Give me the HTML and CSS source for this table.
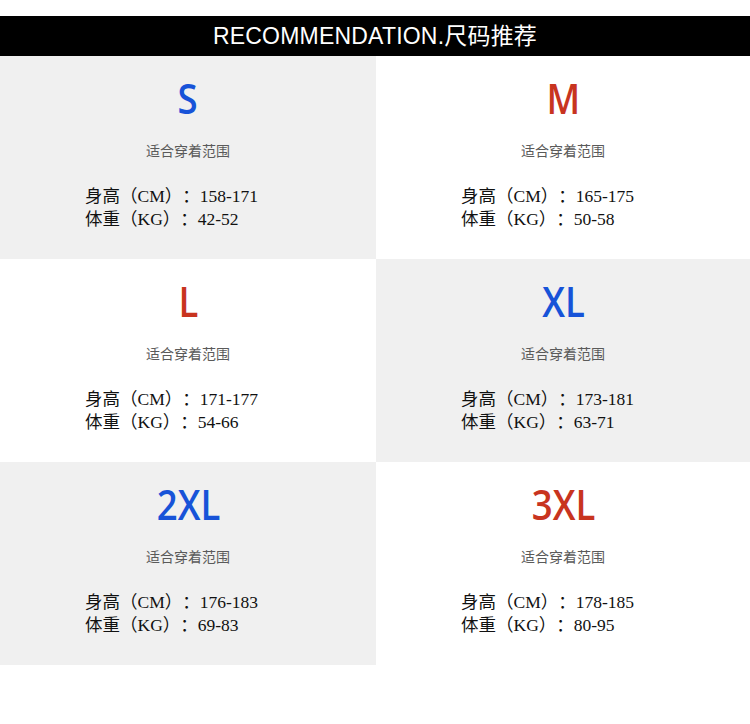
FILE: index.html
```html
<!DOCTYPE html>
<html lang="zh">
<head>
<meta charset="utf-8">
<title>尺码推荐</title>
<link rel="stylesheet" href="styles.css">
</head>
<body>
<div class="page">
  <header class="banner">RECOMMENDATION.尺码推荐</header>
  <section class="grid">
    <div class="cell gray">
      <div class="size blue">S</div>
      <div class="sub">适合穿着范围</div>
      <div class="info"><div>身高（CM）：158-171</div><div>体重（KG）：42-52</div></div>
    </div>
    <div class="cell">
      <div class="size red">M</div>
      <div class="sub">适合穿着范围</div>
      <div class="info"><div>身高（CM）：165-175</div><div>体重（KG）：50-58</div></div>
    </div>
    <div class="cell">
      <div class="size red">L</div>
      <div class="sub">适合穿着范围</div>
      <div class="info"><div>身高（CM）：171-177</div><div>体重（KG）：54-66</div></div>
    </div>
    <div class="cell gray">
      <div class="size blue">XL</div>
      <div class="sub">适合穿着范围</div>
      <div class="info"><div>身高（CM）：173-181</div><div>体重（KG）：63-71</div></div>
    </div>
    <div class="cell gray">
      <div class="size blue">2XL</div>
      <div class="sub">适合穿着范围</div>
      <div class="info"><div>身高（CM）：176-183</div><div>体重（KG）：69-83</div></div>
    </div>
    <div class="cell">
      <div class="size red">3XL</div>
      <div class="sub">适合穿着范围</div>
      <div class="info"><div>身高（CM）：178-185</div><div>体重（KG）：80-95</div></div>
    </div>
  </section>
</div>
</body>
</html>
```

FILE: styles.css
```css
html, body {
  margin: 0;
  padding: 0;
  background: #ffffff;
}

.page {
  width: 750px;
  padding-top: 16px;
}

.banner {
  height: 40px;
  background: #000000;
  color: #ffffff;
  font-family: "Liberation Sans", "Noto Sans CJK SC", sans-serif;
  font-size: 23px;
  line-height: 40px;
  text-align: center;
  letter-spacing: 0.2px;
}

.grid {
  display: grid;
  grid-template-columns: 376px 374px;
  grid-auto-rows: 203px;
}

.cell {
  display: flex;
  flex-direction: column;
  align-items: center;
  background: #ffffff;
}

.cell.gray {
  background: #f0f0f0;
}

.size {
  margin-top: 17px;
  font-family: "Open Sans", "Noto Sans", sans-serif;
  font-weight: 600;
  font-size: 42px;
  line-height: 50px;
  height: 50px;
  transform: scaleX(0.87);
}

.blue { color: #1753d8; }
.red { color: #c8341f; }

.sub {
  margin-top: 17px;
  font-family: "Noto Sans CJK SC", sans-serif;
  font-size: 14px;
  line-height: 20px;
  color: #5a5a5a;
}

.info {
  align-self: stretch;
  margin-top: 25px;
  padding-left: 85px;
  font-family: "Liberation Serif", "Noto Sans CJK SC", serif;
  font-size: 17.5px;
  line-height: 23px;
  color: #111111;
  text-spacing-trim: space-all;
  font-feature-settings: "halt" 0, "chws" 0;
}
```
